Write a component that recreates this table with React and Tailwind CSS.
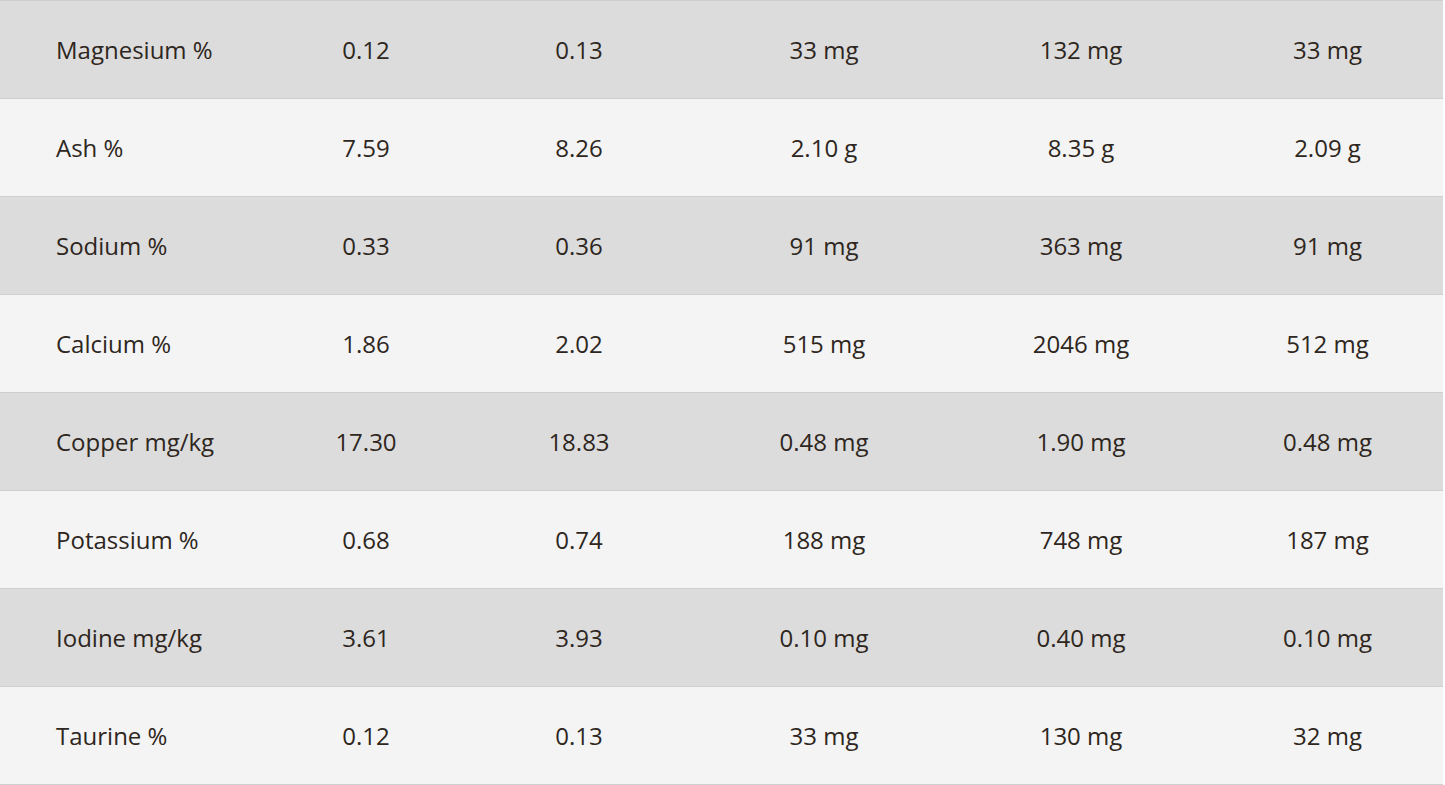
const rows = [
  ["Magnesium %", "0.12", "0.13", "33 mg", "132 mg", "33 mg"],
  ["Ash %", "7.59", "8.26", "2.10 g", "8.35 g", "2.09 g"],
  ["Sodium %", "0.33", "0.36", "91 mg", "363 mg", "91 mg"],
  ["Calcium %", "1.86", "2.02", "515 mg", "2046 mg", "512 mg"],
  ["Copper mg/kg", "17.30", "18.83", "0.48 mg", "1.90 mg", "0.48 mg"],
  ["Potassium %", "0.68", "0.74", "188 mg", "748 mg", "187 mg"],
  ["Iodine mg/kg", "3.61", "3.93", "0.10 mg", "0.40 mg", "0.10 mg"],
  ["Taurine %", "0.12", "0.13", "33 mg", "130 mg", "32 mg"],
];

export default function App() {
  return (
    <div className="w-[1445px] h-[785px] overflow-hidden bg-white font-['Open_Sans',sans-serif] text-[24px] text-[#2e2620]">
      <div className="w-[1443px] border-t border-[#cfcfcf]">
        {rows.map((r, i) => (
          <div
            key={i}
            className={
              "grid grid-cols-[260px_212px_214px_276px_238px_1fr] items-center h-[98px] border-b border-[#cfcfcf] " +
              (i % 2 === 0 ? "bg-[#dcdcdc]" : "bg-[#f4f4f4]")
            }
          >
            <div className="pl-[56px]">{r[0]}</div>
            <div className="text-center">{r[1]}</div>
            <div className="text-center">{r[2]}</div>
            <div className="text-center">{r[3]}</div>
            <div className="text-center">{r[4]}</div>
            <div className="text-center pl-[12px]">{r[5]}</div>
          </div>
        ))}
      </div>
    </div>
  );
}
